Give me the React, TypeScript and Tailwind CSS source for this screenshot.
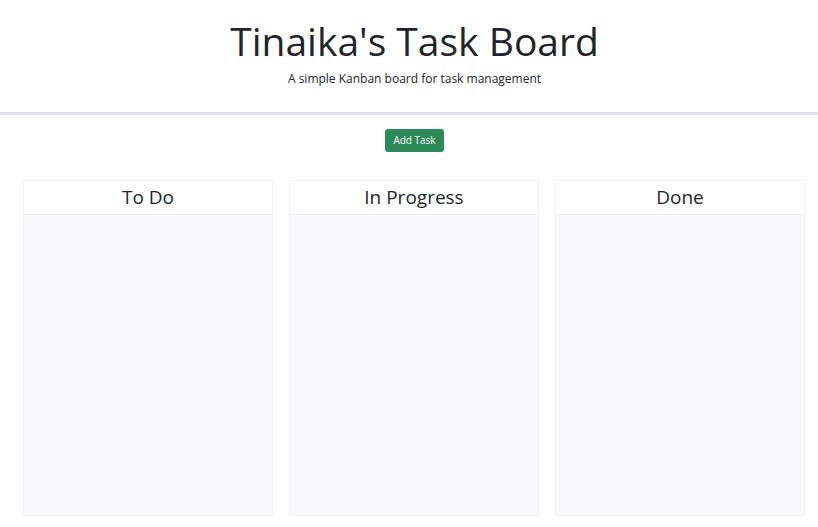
import React from "react";

const columns = ["To Do", "In Progress", "Done"];

function Column({ title }: { title: string }) {
  return (
    <div className="flex flex-col border border-[#f3f4f6] shadow-[0_0_2px_rgba(0,0,0,0.04)]">
      <div className="flex h-[34px] items-center justify-center border-b border-[#eef0f2] bg-white text-[19px] text-[#212529]">
        {title}
      </div>
      <div className="h-[300px] bg-[#f8f9fa]" />
    </div>
  );
}

export default function App() {
  return (
    <div
      className="min-h-screen bg-white text-[#212529]"
      style={{ fontFamily: '"Open Sans", "Noto Sans", sans-serif' }}
    >
      <header className="flex flex-col items-center border-b-[3px] border-[#e3e3ee] pl-[11px] pt-[15px] pb-[24px]">
        <h1 className="text-[39px] leading-[52px] font-normal">Tinaika's Task Board</h1>
        <p className="mt-[3px] text-[12px] leading-[18px]">A simple Kanban board for task management</p>
      </header>
      <div className="flex justify-center pl-[11px] pt-[14px]">
        <button className="h-[23px] rounded-[3px] bg-[#2b8a57] px-[8px] text-[10px] text-white">
          Add Task
        </button>
      </div>
      <div className="grid grid-cols-3 gap-[16px] pl-[23px] pr-[13px] pt-[28px]">
        {columns.map((c) => (
          <Column key={c} title={c} />
        ))}
      </div>
    </div>
  );
}
